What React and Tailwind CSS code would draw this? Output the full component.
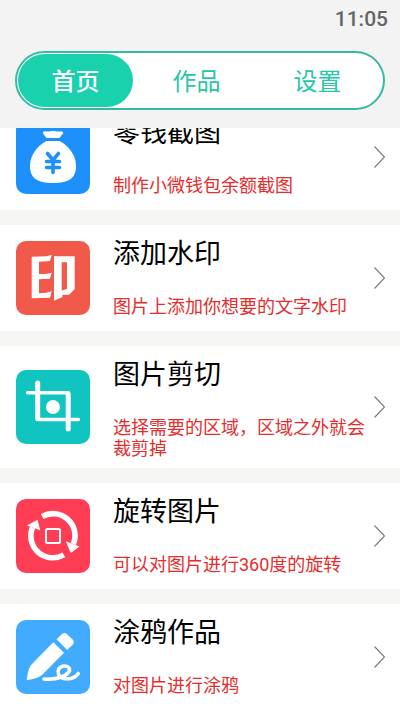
const tabs = ["首页", "作品", "设置"];

function MoneyBagIcon() {
  return (
    <svg viewBox="0 0 74 74" className="size-full" fill="#fff" aria-hidden="true">
      <path d="M27 13.5C26.5 11.8 28 11 30 11.4C33 12 34 11 37 11C40 11 41 12 44 11.4C46 11 47.5 11.8 47 13.5L43.5 18H30.5Z" />
      <path d="M30.5 21H43.5C53 26 60 35.5 60 46C60 58 53 63 37 63C21 63 14 58 14 46C14 35.5 21 26 30.5 21Z" />
      <path
        d="M31.5 33.5L37 40L42.5 33.5M37 40V52.5M30.5 41.5H43.5M30.5 47.5H43.5"
        fill="none"
        stroke="#1e90fb"
        strokeWidth="3.6"
        strokeLinecap="round"
        strokeLinejoin="round"
      />
    </svg>
  );
}

function SealIcon() {
  return (
    <svg viewBox="0 0 74 74" className="size-full" fill="#fff" aria-hidden="true">
      <path d="M15.7 15.7L30 15.3L35.7 14L34 20L23 20.7V33H30L35.7 31.7L34 37.8L23 38.3V52.3L30 51.8L35.7 50.3L34 56.7L15.7 57.3Z" />
      <path
        fillRule="evenodd"
        d="M38 15.3H58.7V48.3L53 53.7H46.5V56L38 59.7ZM45.7 21.3V49.5L51 48V21.3Z"
      />
    </svg>
  );
}

function CropIcon() {
  return (
    <svg viewBox="0 0 74 74" className="size-full" fill="none" aria-hidden="true">
      <g stroke="#fff" strokeLinecap="round">
        <path d="M21.7 13V48.5M52.2 24V59" strokeWidth="5" />
        <path d="M11.5 22.7H52.5M21.5 49.5H62.5" strokeWidth="3.4" />
      </g>
      <circle cx="37" cy="37" r="7" fill="#fff" />
    </svg>
  );
}

function RotateIcon() {
  return (
    <svg viewBox="0 0 74 74" className="size-full" fill="none" aria-hidden="true">
      <g stroke="#fff" strokeWidth="5.6">
        <path d="M26.2 17.5A22 22 0 0 1 57.4 45" />
        <path d="M47.8 55.9A22 22 0 0 1 16.5 28.5" />
      </g>
      <path d="M49.8 42.3L63.5 47.5L54.8 54Z" fill="#fff" />
      <path d="M10.8 26.6L21.6 20.8L24.2 31.3Z" fill="#fff" />
      <rect x="30" y="30" width="14" height="14" rx="1.5" stroke="#fff" strokeWidth="2" />
    </svg>
  );
}

function PencilIcon() {
  return (
    <svg viewBox="0 0 74 74" className="size-full" fill="#fff" aria-hidden="true">
      <path d="M37.3 22.3L48 32.7L25.8 55.2C21.5 58.2 16 59 10.7 60.2C11.5 55 11.8 50 14.6 45.4Z" />
      <path d="M40.6 19.2L45.8 14.2Q48.4 11.8 51 14.2L56.6 19.6Q59 22.2 56.6 24.8L51.2 30Z" />
      <path
        d="M28 59C34 59.5 40 59 45.5 57C51.5 54.5 55 51 53 48C51 45 45 45.5 42.8 49C40.8 52.5 43 56.5 46.5 58C52 60 60 58 62.2 53.5"
        fill="none"
        stroke="#fff"
        strokeWidth="3.6"
        strokeLinecap="round"
        strokeLinejoin="round"
      />
    </svg>
  );
}

const tools = [
  { title: "零钱截图", desc: "制作小微钱包余额截图", Icon: MoneyBagIcon, color: "bg-[#1e90fb]" },
  { title: "添加水印", desc: "图片上添加你想要的文字水印", Icon: SealIcon, color: "bg-[#f15a4a]" },
  { title: "图片剪切", desc: "选择需要的区域，区域之外就会裁剪掉", Icon: CropIcon, color: "bg-[#10c4bf]" },
  { title: "旋转图片", desc: "可以对图片进行360度的旋转", Icon: RotateIcon, color: "bg-[#ff3e55]" },
  { title: "涂鸦作品", desc: "对图片进行涂鸦", Icon: PencilIcon, color: "bg-[#40abff]" },
];

function ToolCard({ title, desc, Icon, color }) {
  return (
    <li>
      <button type="button" className="flex min-h-[106px] w-full items-center bg-white pr-[15px] pl-4 text-left">
        <span className={`size-[74px] shrink-0 overflow-hidden rounded-[10px] ${color}`}>
          <Icon />
        </span>
        <span className="ml-[23px] flex min-w-0 flex-1 flex-col gap-[22px] self-start pt-[9px] pb-[9px]">
          <span className="text-[27px] leading-10 text-black">{title}</span>
          <span className="text-[18px] leading-[21px] text-[#e52d2d]">{desc}</span>
        </span>
        <svg viewBox="0 0 11 22" className="h-[22px] w-[11px] shrink-0" fill="none" aria-hidden="true">
          <path d="M0.5 0.5L10.5 11L0.5 21.5" stroke="#777" strokeWidth="1.1" />
        </svg>
      </button>
    </li>
  );
}

export default function App() {
  return (
    <div className="flex min-h-screen flex-col bg-[#f5f5f4] font-[Roboto,'Noto_Sans_CJK_SC',sans-serif]">
      <header className="bg-[#f3f3f3] px-[15px] pb-[18px]">
        <div className="-mr-[3px] flex h-[51px] justify-end pt-[7px]">
          <time className="text-[21px] leading-6 font-medium text-[#666]">11:05</time>
        </div>
        <nav className="flex h-[59px] gap-[6px] rounded-full border-2 border-[#35b9a0] bg-white p-px pr-2">
          {tabs.map((tab, i) => (
            <button
              key={tab}
              type="button"
              aria-current={i === 0 ? "page" : undefined}
              className={
                i === 0
                  ? "flex-1 rounded-full bg-[#1ad1ae] pt-0.5 text-2xl font-medium text-white"
                  : "flex-1 rounded-full pt-0.5 text-2xl text-[#26c6a6]"
              }
            >
              {tab}
            </button>
          ))}
        </nav>
      </header>

      <main className="flex-1 overflow-hidden">
        {/* list is scrolled a little, first card sits partly under the header */}
        <ul className="-mt-6 flex flex-col gap-[15px]">
          {tools.map((tool) => (
            <ToolCard key={tool.title} {...tool} />
          ))}
        </ul>
      </main>
    </div>
  );
}
